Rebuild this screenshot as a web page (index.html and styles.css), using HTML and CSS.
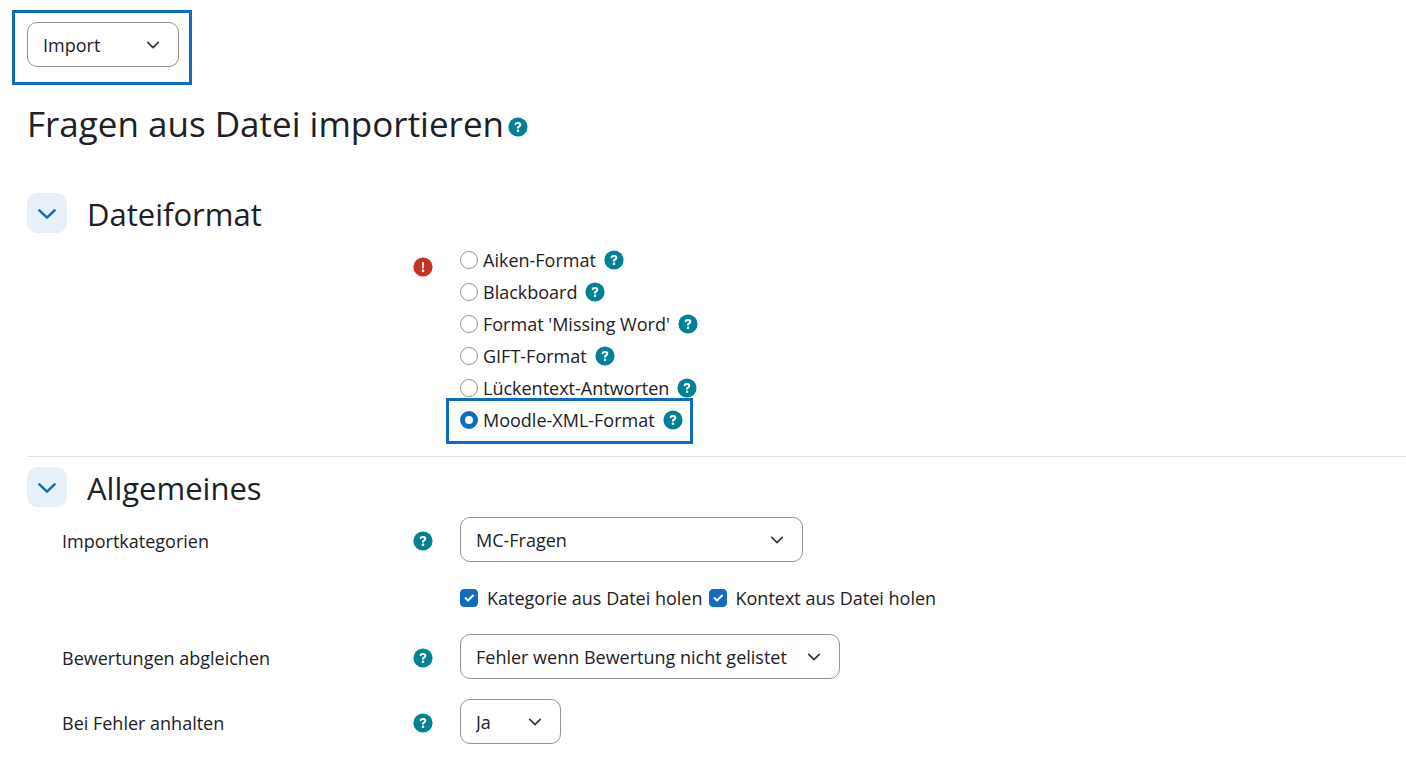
FILE: index.html
```html
<!DOCTYPE html>
<html lang="de">
<head>
    <meta charset="UTF-8">
    <meta name="viewport" content="width=device-width, initial-scale=1.0">
    <title>Fragen aus Datei importieren</title>
    <link rel="stylesheet" href="styles.css">
</head>
<body>

    <!-- shared icons -->
    <svg class="sprite" aria-hidden="true">
        <symbol id="icon-help" viewBox="0 0 20 20">
            <circle cx="10" cy="10" r="9.6" fill="#008196"/>
            <path d="M7.6 7.2C7.8 6.4 8.5 6 9.4 6h1c1.1 0 1.9.7 1.9 1.7 0 .7-.4 1.2-1 1.6L10 10.2v.6" fill="none" stroke="#fff" stroke-width="2" stroke-linecap="round" stroke-linejoin="round"/>
            <circle cx="10" cy="13.7" r="1.3" fill="#fff"/>
        </symbol>
        <symbol id="icon-required" viewBox="0 0 20 20">
            <circle cx="10" cy="10" r="9.6" fill="#ca3120"/>
            <path d="M10 6v4.6" fill="none" stroke="#fff" stroke-width="2" stroke-linecap="round"/>
            <circle cx="10" cy="13.9" r="1.3" fill="#fff"/>
        </symbol>
        <symbol id="icon-chevron" viewBox="0 0 20 20">
            <path d="M2.4 7.3l7.6 7.4 7.6-7.4" fill="none" stroke="#0f6cbf" stroke-width="2.5" stroke-linecap="round" stroke-linejoin="round"/>
        </symbol>
    </svg>

    <div class="page">
        <div class="action-menu">
            <select class="select select-action" aria-label="Aktion">
                <option>Import</option>
            </select>
        </div>

        <div class="title">
            <h1>Fragen aus Datei importieren</h1>
            <button type="button" class="help" aria-label="Hilfe"><svg><use href="#icon-help"/></svg></button>
        </div>

        <form>
            <section class="section">
                <div class="section-head">
                    <button type="button" class="toggle" aria-label="Dateiformat einklappen"><svg><use href="#icon-chevron"/></svg></button>
                    <h2>Dateiformat</h2>
                </div>
                <div class="row row-formats">
                    <div class="row-label">
                        <svg class="required" role="img" aria-label="Erforderlich"><use href="#icon-required"/></svg>
                    </div>
                    <div class="formats">
                        <div class="format">
                            <label><input type="radio" name="format">Aiken-Format</label>
                            <button type="button" class="help" aria-label="Hilfe"><svg><use href="#icon-help"/></svg></button>
                        </div>
                        <div class="format">
                            <label><input type="radio" name="format">Blackboard</label>
                            <button type="button" class="help" aria-label="Hilfe"><svg><use href="#icon-help"/></svg></button>
                        </div>
                        <div class="format">
                            <label><input type="radio" name="format">Format 'Missing Word'</label>
                            <button type="button" class="help" aria-label="Hilfe"><svg><use href="#icon-help"/></svg></button>
                        </div>
                        <div class="format">
                            <label><input type="radio" name="format">GIFT-Format</label>
                            <button type="button" class="help" aria-label="Hilfe"><svg><use href="#icon-help"/></svg></button>
                        </div>
                        <div class="format">
                            <label><input type="radio" name="format">Lückentext-Antworten</label>
                            <button type="button" class="help" aria-label="Hilfe"><svg><use href="#icon-help"/></svg></button>
                        </div>
                        <div class="format marked">
                            <label><input type="radio" name="format" checked>Moodle-XML-Format</label>
                            <button type="button" class="help" aria-label="Hilfe"><svg><use href="#icon-help"/></svg></button>
                        </div>
                    </div>
                </div>
            </section>

            <section class="section">
                <div class="section-head">
                    <button type="button" class="toggle" aria-label="Allgemeines einklappen"><svg><use href="#icon-chevron"/></svg></button>
                    <h2>Allgemeines</h2>
                </div>
                <div class="row">
                    <div class="row-label">
                        <label for="category">Importkategorien</label>
                        <button type="button" class="help" aria-label="Hilfe"><svg><use href="#icon-help"/></svg></button>
                    </div>
                    <div>
                        <select id="category" class="select select-wide">
                            <option>MC-Fragen</option>
                        </select>
                        <div class="checks">
                            <label><input type="checkbox" checked>Kategorie aus Datei holen</label>
                            <label><input type="checkbox" checked>Kontext aus Datei holen</label>
                        </div>
                    </div>
                </div>
                <div class="row">
                    <div class="row-label">
                        <label for="grades">Bewertungen abgleichen</label>
                        <button type="button" class="help" aria-label="Hilfe"><svg><use href="#icon-help"/></svg></button>
                    </div>
                    <div>
                        <select id="grades" class="select">
                            <option>Fehler wenn Bewertung nicht gelistet</option>
                        </select>
                    </div>
                </div>
                <div class="row">
                    <div class="row-label">
                        <label for="stop">Bei Fehler anhalten</label>
                        <button type="button" class="help" aria-label="Hilfe"><svg><use href="#icon-help"/></svg></button>
                    </div>
                    <div>
                        <select id="stop" class="select select-short">
                            <option>Ja</option>
                        </select>
                    </div>
                </div>
            </section>
        </form>
    </div>

</body>
</html>
```
FILE: styles.css
```css
* {
    box-sizing: border-box;
}

body {
    margin: 0;
    font-family: "Open Sans", "Noto Sans", sans-serif;
    font-size: 18px;
    line-height: 32px;
    color: #1d2125;
    background-color: #fff;
}

h1, h2 {
    margin: 0;
    font-weight: 400;
}

h1 {
    font-size: 35px;
    line-height: 48px;
}

h2 {
    padding-top: 2px;
    font-size: 31px;
    line-height: 38px;
}

.sprite {
    display: none;
}

.page {
    padding: 10px 0 0 27px;
}

/* highlighted action menu */
.action-menu {
    width: fit-content;
    margin-left: -15px;
    padding: 9px 10px 15px 12px;
    border: 3px solid #0f6cbf;
}

.select {
    display: block;
    appearance: none;
    height: 45px;
    padding: 0 52px 0 15px;
    border: 1px solid #8f959e;
    border-radius: 10px;
    font: inherit;
    color: inherit;
    background: #fff url("data:image/svg+xml,%3Csvg xmlns='http://www.w3.org/2000/svg' viewBox='0 0 16 16'%3E%3Cpath fill='none' stroke='%23343a40' stroke-linecap='round' stroke-linejoin='round' stroke-width='2' d='M2 5l6 6 6-6'/%3E%3C/svg%3E") no-repeat right 18px center / 14px 14px;
}

.select-action {
    width: 152px;
}

.select-wide {
    width: 343px;
}

.select-short {
    width: 101px;
}

.title {
    display: flex;
    align-items: center;
    gap: 4px;
    margin-top: 15px;
}

.title .help {
    margin-top: 5px;
}

.help {
    display: flex;
    padding: 0;
    border: none;
    background: none;
    cursor: pointer;
}

.help svg,
.required {
    width: 20px;
    height: 20px;
}

.section {
    padding: 10px 0 20px;
}

.section + .section {
    border-top: 1px solid #dee2e6;
}

.title + form {
    margin-top: 35px;
}

.section-head {
    display: flex;
    align-items: center;
    gap: 20px;
    margin-bottom: 10px;
}

.toggle {
    display: flex;
    align-items: center;
    justify-content: center;
    width: 40px;
    height: 40px;
    padding: 0;
    border: none;
    border-radius: 10px;
    background-color: #e7f0f9;
    cursor: pointer;
}

.toggle svg {
    width: 20px;
    height: 20px;
}

.row {
    display: grid;
    grid-template-columns: 371px 1fr;
    column-gap: 27px;
    padding-left: 35px;
}

.row + .row {
    margin-top: 20px;
}

.row-label {
    display: flex;
    align-items: center;
    justify-content: space-between;
    height: 45px;
    padding-top: 2px;
}

.row-formats .row-label {
    justify-content: flex-end;
}

.formats {
    padding-top: 1px;
}

.format {
    display: flex;
    align-items: center;
    gap: 8px;
    width: fit-content;
}

.format label {
    display: flex;
    align-items: center;
    gap: 5px;
}

/* frame around the chosen format */
.marked {
    position: relative;
}

.marked::after {
    content: "";
    position: absolute;
    inset: -6px -10px -8px -14px;
    border: 3px solid #0f6cbf;
    pointer-events: none;
}

input {
    appearance: none;
    flex: none;
    width: 18px;
    height: 18px;
    margin: 0;
    border: 1px solid #8f959e;
    background-color: #fff;
}

input[type="radio"] {
    border-radius: 50%;
}

input[type="radio"]:checked {
    border: 5px solid #0f6cbf;
}

input[type="checkbox"] {
    border-radius: 4px;
}

input[type="checkbox"]:checked {
    border-color: #0f6cbf;
    background: #0f6cbf url("data:image/svg+xml,%3Csvg xmlns='http://www.w3.org/2000/svg' viewBox='0 0 16 16'%3E%3Cpath fill='none' stroke='%23fff' stroke-linecap='round' stroke-linejoin='round' stroke-width='2' d='M4.5 8l2.5 2.5 5-5'/%3E%3C/svg%3E") center / 16px 16px;
}

.checks {
    display: flex;
    gap: 6px;
    margin-top: 20px;
}

.checks label {
    display: flex;
    align-items: center;
    gap: 9px;
}
```
